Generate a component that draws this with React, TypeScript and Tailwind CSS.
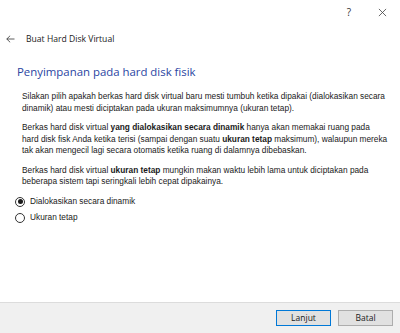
import React, { useState } from "react";

function Radio({ checked }: { checked: boolean }) {
  return (
    <span className="flex h-[10px] w-[10px] items-center justify-center rounded-full border border-[#333333] bg-white">
      {checked && <span className="h-[5px] w-[5px] rounded-full bg-[#1a1a1a]" />}
    </span>
  );
}

export default function App() {
  const [mode, setMode] = useState<"dynamic" | "fixed">("dynamic");

  return (
    <div className="flex h-[333px] w-[400px] flex-col bg-white text-[#1a1a1a]">
      {/* window controls */}
      <div className="flex h-[24px] items-center justify-end pr-[13px]" style={{ fontFamily: '"Open Sans", sans-serif' }}>
        <span className="mr-[27px] text-[10px] text-[#333]">?</span>
        <svg width="9" height="9" viewBox="0 0 10 10" className="text-[#444]">
          <path d="M1 1 L9 9 M9 1 L1 9" stroke="currentColor" strokeWidth="0.9" />
        </svg>
      </div>

      {/* wizard title */}
      <div className="flex h-[30px] items-center gap-[11px] pl-[6px]" style={{ fontFamily: '"Open Sans", sans-serif' }}>
        <svg width="9" height="8" viewBox="0 0 10 9" className="text-[#333]">
          <path d="M0.8 4.5 H9.5 M4.6 0.8 L0.8 4.5 L4.6 8.2" stroke="currentColor" strokeWidth="0.9" fill="none" />
        </svg>
        <span className="text-[8.6px] text-[#1a1a1a]">Buat Hard Disk Virtual</span>
      </div>

      {/* heading */}
      <h1
        className="ml-[17px] mt-[10px] text-[11.4px] leading-[16px] text-[#2a45a2]"
        style={{ fontFamily: '"Open Sans", sans-serif' }}
      >
        Penyimpanan pada hard disk fisik
      </h1>

      <div className="ml-[22px] mt-[11px] text-[8.3px] leading-[11.5px]" style={{ fontFamily: '"Liberation Sans", Arial, sans-serif' }}>
        <p className="mb-[8px]">
          Silakan pilih apakah berkas hard disk virtual baru mesti tumbuh ketika dipakai (dialokasikan secara
          <br />
          dinamik) atau mesti diciptakan pada ukuran maksimumnya (ukuran tetap).
        </p>
        <p className="mb-[8px]">
          Berkas hard disk virtual <b>yang dialokasikan secara dinamik</b> hanya akan memakai ruang pada
          <br />
          hard disk fisk Anda ketika terisi (sampai dengan suatu <b>ukuran tetap</b> maksimum), walaupun mereka
          <br />
          tak akan mengecil lagi secara otomatis ketika ruang di dalamnya dibebaskan.
        </p>
        <p>
          Berkas hard disk virtual <b>ukuran tetap</b> mungkin makan waktu lebih lama untuk diciptakan pada
          <br />
          beberapa sistem tapi seringkali lebih cepat dipakainya.
        </p>
      </div>

      {/* options */}
      <div className="ml-[15px] mt-[6px] flex flex-col text-[8.3px]" style={{ fontFamily: '"Liberation Sans", Arial, sans-serif' }}>
        <label className="flex h-[16px] items-center gap-[5px]" onClick={() => setMode("dynamic")}>
          <Radio checked={mode === "dynamic"} />
          <span>Dialokasikan secara dinamik</span>
        </label>
        <label className="flex h-[16px] items-center gap-[5px]" onClick={() => setMode("fixed")}>
          <Radio checked={mode === "fixed"} />
          <span>Ukuran tetap</span>
        </label>
      </div>

      <div className="flex-1" />

      {/* footer */}
      <div
        className="flex h-[31px] items-center justify-end gap-[7px] border-t border-[#dcdcdc] bg-[#f0f0f0] pr-[7px]"
        style={{ fontFamily: '"Open Sans", sans-serif' }}
      >
        <button className="h-[16px] w-[55px] border border-[#0078d7] bg-[#e1e1e1] text-[8.5px] leading-none text-[#1a1a1a]">
          Lanjut
        </button>
        <button className="h-[16px] w-[55px] border border-[#adadad] bg-[#e1e1e1] text-[8.5px] leading-none text-[#1a1a1a]">
          Batal
        </button>
      </div>
    </div>
  );
}
